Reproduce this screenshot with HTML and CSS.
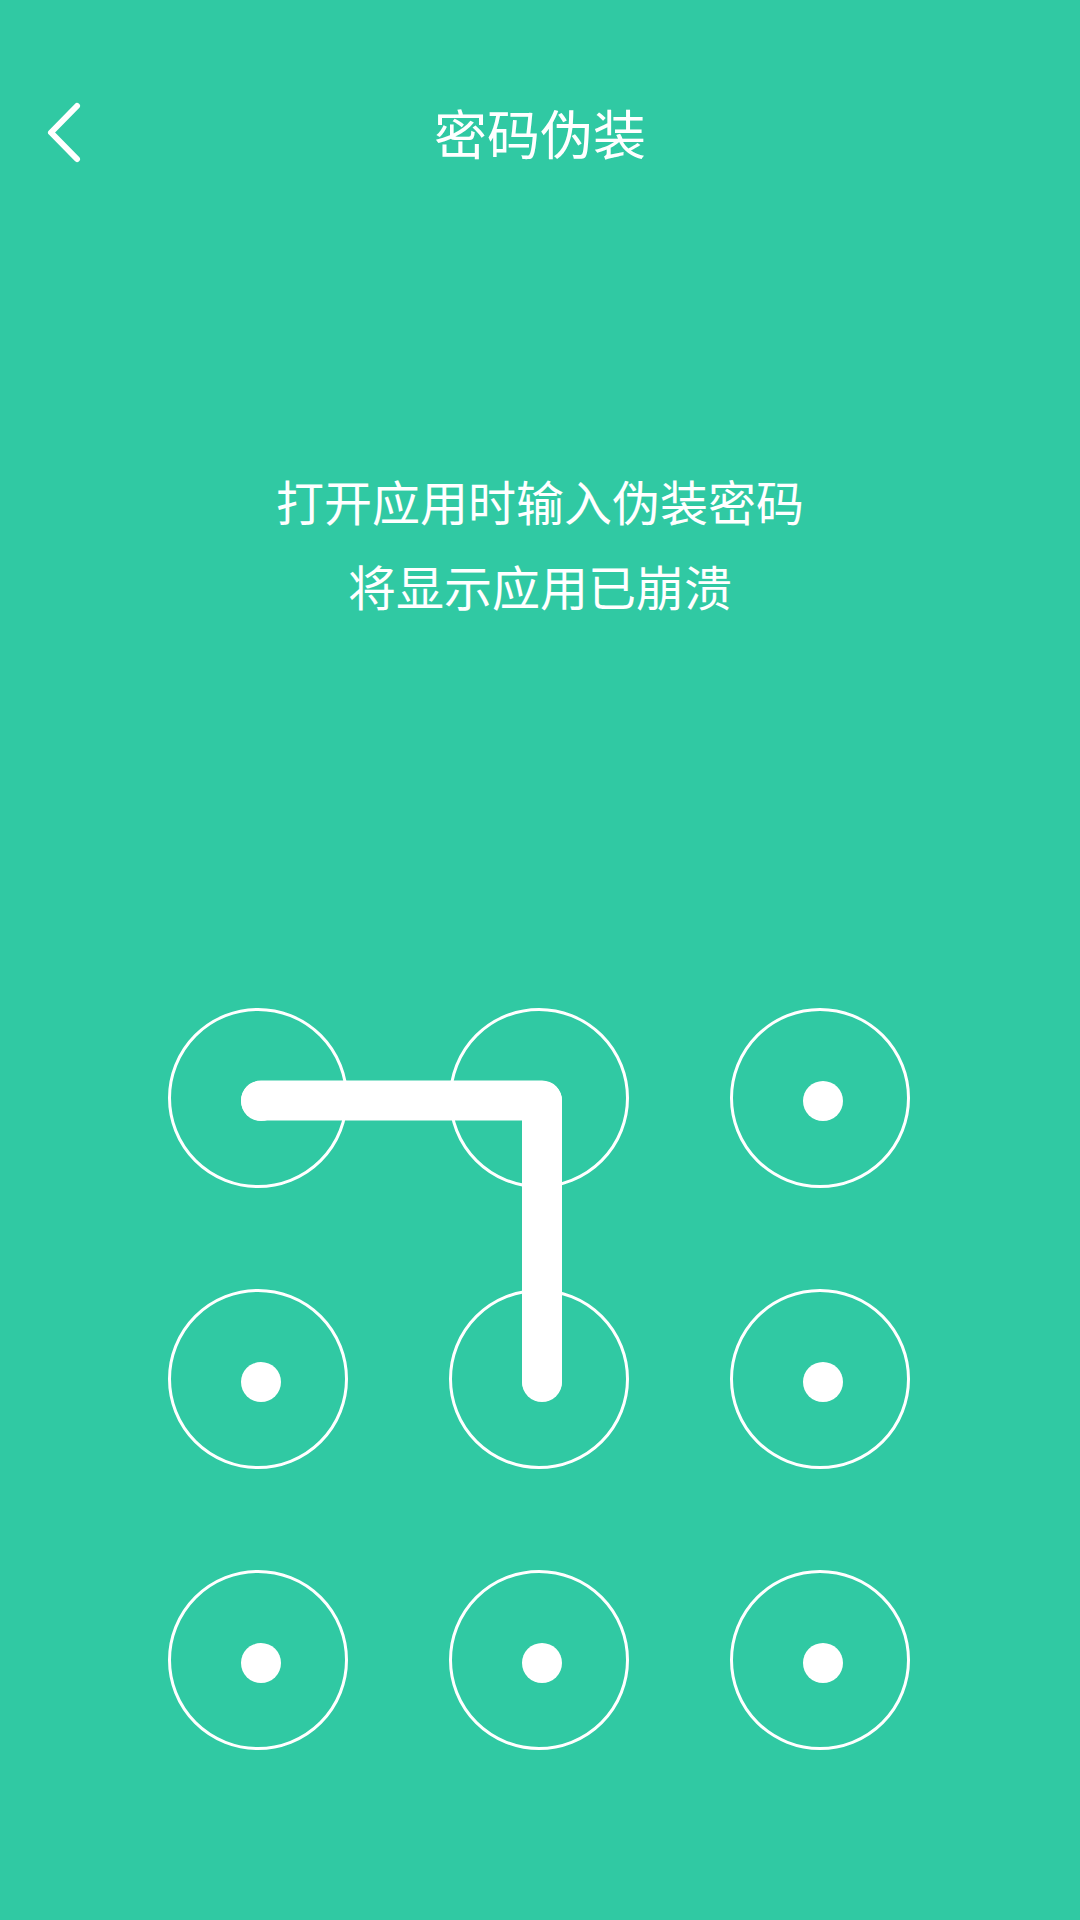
FILE: index.html
```html
<!DOCTYPE html>
<html lang="zh-CN">
<head>
<meta charset="utf-8">
<title>密码伪装</title>
<link rel="stylesheet" href="styles.css">
</head>
<body>
<div class="screen">
  <header class="topbar">
    <button class="back" aria-label="返回">
      <svg width="40" height="70" viewBox="0 0 40 70">
        <path d="M33 9 L7 35.5 L33 62" fill="none" stroke="#fff" stroke-width="6" stroke-linecap="round" stroke-linejoin="round"/>
      </svg>
    </button>
    <h1 class="title">密码伪装</h1>
    <div class="spacer"></div>
  </header>

  <p class="hint">打开应用时输入伪装密码<br>将显示应用已崩溃</p>

  <div class="pattern">
    <div class="node"><span class="dot"></span></div>
    <div class="node"><span class="dot"></span></div>
    <div class="node"><span class="dot"></span></div>
    <div class="node"><span class="dot"></span></div>
    <div class="node"><span class="dot"></span></div>
    <div class="node"><span class="dot"></span></div>
    <div class="node"><span class="dot"></span></div>
    <div class="node"><span class="dot"></span></div>
    <div class="node"><span class="dot"></span></div>
    <svg class="trace" width="742" height="742" viewBox="0 0 742 742">
      <path d="M93 92.5 L374 92.5 L374 373" fill="none" stroke="#fff" stroke-width="40" stroke-linecap="round" stroke-linejoin="round"/>
    </svg>
  </div>
</div>
</body>
</html>
```

FILE: styles.css
```css
html, body {
  margin: 0;
  padding: 0;
  background: #30c9a3;
}

.screen {
  width: 1080px;
  height: 1920px;
  background: #30c9a3;
  color: #ffffff;
  font-family: "Noto Sans CJK SC", "Noto Sans", sans-serif;
  overflow: hidden;
}

.topbar {
  height: 264px;
  display: grid;
  grid-template-columns: 1fr auto 1fr;
  align-items: center;
}

.back {
  justify-self: start;
  margin-left: 44px;
  padding: 0;
  border: 0;
  background: none;
  display: flex;
}

.title {
  margin: 0;
  font-size: 53px;
  font-weight: 400;
  line-height: 1;
  letter-spacing: 0;
}

.hint {
  margin: 194px 0 0;
  text-align: center;
  font-size: 48px;
  line-height: 85px;
  font-weight: 400;
}

.pattern {
  position: relative;
  width: 742px;
  margin: 380px 0 0 168px;
  display: grid;
  grid-template-columns: repeat(3, 180px);
  grid-auto-rows: 180px;
  column-gap: 101px;
  row-gap: 101px;
}

.node {
  box-sizing: border-box;
  width: 180px;
  height: 180px;
  border: 3px solid #ffffff;
  border-radius: 50%;
  display: flex;
  align-items: center;
  justify-content: center;
  padding: 6px 0 0 6px;
}

.dot {
  width: 40px;
  height: 40px;
  border-radius: 50%;
  background: #ffffff;
}

.trace {
  position: absolute;
  left: 0;
  top: 0;
}
```
